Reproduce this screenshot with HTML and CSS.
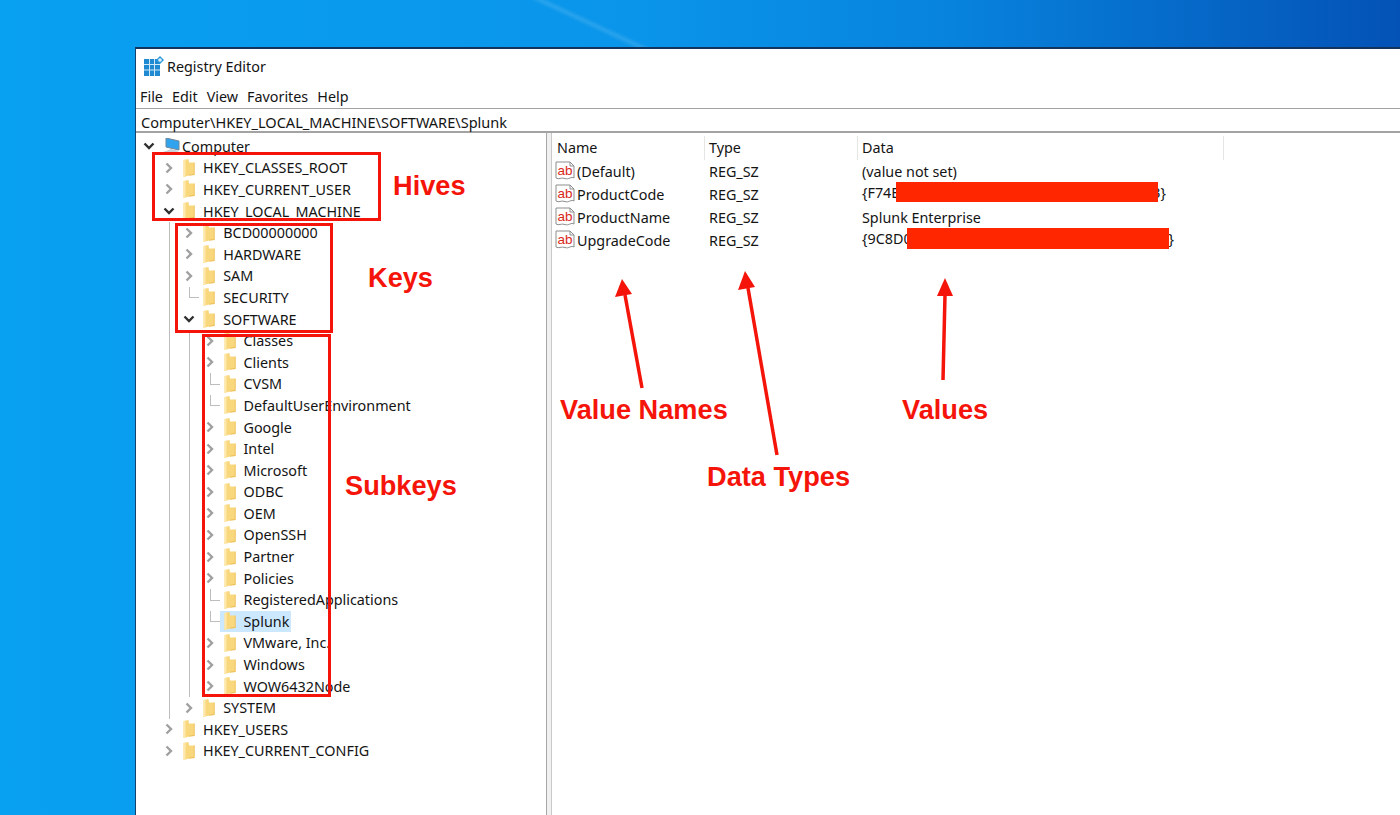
FILE: index.html
```html
<!DOCTYPE html>
<html lang="en">

<head>
  <meta charset="UTF-8">
  <title>Registry Editor</title>
  <link rel="stylesheet" href="styles.css">
</head>

<body>
  <svg class="sprites" xmlns="http://www.w3.org/2000/svg" aria-hidden="true">
    <symbol id="folder" viewBox="0 0 12 18">
      <path d="M0.5 1 L5.5 0 L6 3.5 L11.5 3.5 L11.5 16 L6 16.5 L0.5 18 Z" fill="#f9d77d"></path>
      <path d="M0.5 1 L2.5 0.6 L2.5 17.5 L0.5 18 Z" fill="#fde9ae"></path>
      <path d="M10.8 3.5 L11.5 3.5 L11.5 16 L6 16.5 L6 15.7 L10.8 15.3 Z" fill="#e9b84f"></path>
    </symbol>
    <symbol id="closed" viewBox="0 0 12 12">
      <path d="M3.5 1.5 L8 6 L3.5 10.5" fill="none" stroke="#a0a0a0" stroke-width="2.4"></path>
    </symbol>
    <symbol id="open" viewBox="0 0 12 12">
      <path d="M1.5 3.5 L6 8 L10.5 3.5" fill="none" stroke="#303030" stroke-width="2.4"></path>
    </symbol>
    <symbol id="sheet" viewBox="0 0 20 20">
      <path d="M1 1 H15 L19 5 V17 C16 15 14 19 10 17.5 C6 16 4 19 1 17 Z" fill="#fff" stroke="#8d8d8d" stroke-width="1"></path>
      <path d="M15 1 V5 H19" fill="none" stroke="#8d8d8d" stroke-width="1"></path>
    </symbol>
  </svg>

  <div class="window">
    <header class="titlebar">
      <svg class="app-icon" viewBox="0 0 20 20">
        <rect x="0" y="3" width="16" height="17" fill="#1f8ad2"></rect>
        <path d="M5.5 3 V20 M10.5 3 V20 M0 8.5 H16 M0 14 H16" stroke="#cfe8f7" stroke-width="1"></path>
        <path d="M16 0 L20 4 L16 8 L12 4 Z" fill="#2a96da"></path>
        <circle cx="16" cy="4" r="1.8" fill="#dff1fb"></circle>
      </svg>
      <span>Registry Editor</span>
    </header>

    <nav class="menu">
      <span>File</span>
      <span>Edit</span>
      <span>View</span>
      <span>Favorites</span>
      <span>Help</span>
    </nav>

    <div class="address">Computer\HKEY_LOCAL_MACHINE\SOFTWARE\Splunk</div>

    <main class="panes">
      <div class="tree-pane">
        <div class="row root">
          <svg class="twisty"><use href="#open"></use></svg>
          <svg class="pc-icon" viewBox="0 0 18 17">
            <path d="M3 0 L16 3 V12 L3 9 Z" fill="#2fa3ee" stroke="#6f8799" stroke-width="1"></path>
            <path d="M0 14 L8 11 L16 13 L8 16.5 Z" fill="#c9d1d8"></path>
          </svg>
          <span class="root-label">Computer</span>
        </div>

        <ul class="tree">
          <li class="row"><svg class="twisty"><use href="#closed"></use></svg><span class="item"><svg class="folder"><use href="#folder"></use></svg>HKEY_CLASSES_ROOT</span></li>
          <li class="row"><svg class="twisty"><use href="#closed"></use></svg><span class="item"><svg class="folder"><use href="#folder"></use></svg>HKEY_CURRENT_USER</span></li>
          <li>
            <div class="row"><svg class="twisty"><use href="#open"></use></svg><span class="item"><svg class="folder"><use href="#folder"></use></svg>HKEY_LOCAL_MACHINE</span></div>
            <ul class="tree nested">
              <li class="row"><svg class="twisty"><use href="#closed"></use></svg><span class="item"><svg class="folder"><use href="#folder"></use></svg>BCD00000000</span></li>
              <li class="row"><svg class="twisty"><use href="#closed"></use></svg><span class="item"><svg class="folder"><use href="#folder"></use></svg>HARDWARE</span></li>
              <li class="row"><svg class="twisty"><use href="#closed"></use></svg><span class="item"><svg class="folder"><use href="#folder"></use></svg>SAM</span></li>
              <li class="row"><i class="leaf"></i><span class="item"><svg class="folder"><use href="#folder"></use></svg>SECURITY</span></li>
              <li>
                <div class="row"><svg class="twisty"><use href="#open"></use></svg><span class="item"><svg class="folder"><use href="#folder"></use></svg>SOFTWARE</span></div>
                <ul class="tree nested">
                  <li class="row"><svg class="twisty"><use href="#closed"></use></svg><span class="item"><svg class="folder"><use href="#folder"></use></svg>Classes</span></li>
                  <li class="row"><svg class="twisty"><use href="#closed"></use></svg><span class="item"><svg class="folder"><use href="#folder"></use></svg>Clients</span></li>
                  <li class="row"><i class="leaf"></i><span class="item"><svg class="folder"><use href="#folder"></use></svg>CVSM</span></li>
                  <li class="row"><i class="leaf"></i><span class="item"><svg class="folder"><use href="#folder"></use></svg>DefaultUserEnvironment</span></li>
                  <li class="row"><svg class="twisty"><use href="#closed"></use></svg><span class="item"><svg class="folder"><use href="#folder"></use></svg>Google</span></li>
                  <li class="row"><svg class="twisty"><use href="#closed"></use></svg><span class="item"><svg class="folder"><use href="#folder"></use></svg>Intel</span></li>
                  <li class="row"><svg class="twisty"><use href="#closed"></use></svg><span class="item"><svg class="folder"><use href="#folder"></use></svg>Microsoft</span></li>
                  <li class="row"><svg class="twisty"><use href="#closed"></use></svg><span class="item"><svg class="folder"><use href="#folder"></use></svg>ODBC</span></li>
                  <li class="row"><svg class="twisty"><use href="#closed"></use></svg><span class="item"><svg class="folder"><use href="#folder"></use></svg>OEM</span></li>
                  <li class="row"><svg class="twisty"><use href="#closed"></use></svg><span class="item"><svg class="folder"><use href="#folder"></use></svg>OpenSSH</span></li>
                  <li class="row"><svg class="twisty"><use href="#closed"></use></svg><span class="item"><svg class="folder"><use href="#folder"></use></svg>Partner</span></li>
                  <li class="row"><svg class="twisty"><use href="#closed"></use></svg><span class="item"><svg class="folder"><use href="#folder"></use></svg>Policies</span></li>
                  <li class="row"><i class="leaf"></i><span class="item"><svg class="folder"><use href="#folder"></use></svg>RegisteredApplications</span></li>
                  <li class="row"><i class="leaf"></i><span class="item selected"><svg class="folder"><use href="#folder"></use></svg>Splunk</span></li>
                  <li class="row"><svg class="twisty"><use href="#closed"></use></svg><span class="item"><svg class="folder"><use href="#folder"></use></svg>VMware, Inc.</span></li>
                  <li class="row"><svg class="twisty"><use href="#closed"></use></svg><span class="item"><svg class="folder"><use href="#folder"></use></svg>Windows</span></li>
                  <li class="row"><svg class="twisty"><use href="#closed"></use></svg><span class="item"><svg class="folder"><use href="#folder"></use></svg>WOW6432Node</span></li>
                </ul>
              </li>
              <li class="row"><svg class="twisty"><use href="#closed"></use></svg><span class="item"><svg class="folder"><use href="#folder"></use></svg>SYSTEM</span></li>
            </ul>
          </li>
          <li class="row"><svg class="twisty"><use href="#closed"></use></svg><span class="item"><svg class="folder"><use href="#folder"></use></svg>HKEY_USERS</span></li>
          <li class="row"><svg class="twisty"><use href="#closed"></use></svg><span class="item"><svg class="folder"><use href="#folder"></use></svg>HKEY_CURRENT_CONFIG</span></li>
        </ul>
      </div>

      <div class="list-pane">
        <div class="list-head">
          <span>Name</span>
          <span>Type</span>
          <span>Data</span>
        </div>
        <div class="list-row">
          <span class="name"><svg class="ab-icon" viewBox="0 0 20 20"><use href="#sheet"></use><text x="2.5" y="14" class="ab-text">ab</text></svg>(Default)</span>
          <span>REG_SZ</span>
          <span>(value not set)</span>
        </div>
        <div class="list-row">
          <span class="name"><svg class="ab-icon" viewBox="0 0 20 20"><use href="#sheet"></use><text x="2.5" y="14" class="ab-text">ab</text></svg>ProductCode</span>
          <span>REG_SZ</span>
          <span>{F74E<i class="redact redact-first"></i>3}</span>
        </div>
        <div class="list-row">
          <span class="name"><svg class="ab-icon" viewBox="0 0 20 20"><use href="#sheet"></use><text x="2.5" y="14" class="ab-text">ab</text></svg>ProductName</span>
          <span>REG_SZ</span>
          <span>Splunk Enterprise</span>
        </div>
        <div class="list-row">
          <span class="name"><svg class="ab-icon" viewBox="0 0 20 20"><use href="#sheet"></use><text x="2.5" y="14" class="ab-text">ab</text></svg>UpgradeCode</span>
          <span>REG_SZ</span>
          <span>{9C8D0<i class="redact redact-second"></i>}</span>
        </div>
      </div>
    </main>
  </div>

  <!-- annotations drawn over the screenshot -->
  <div class="box box-hives"></div>
  <div class="box box-keys"></div>
  <div class="box box-subkeys"></div>

  <span class="note note-hives">Hives</span>
  <span class="note note-keys">Keys</span>
  <span class="note note-subkeys">Subkeys</span>
  <span class="note note-names">Value Names</span>
  <span class="note note-types">Data Types</span>
  <span class="note note-values">Values</span>

  <svg class="arrows" viewBox="0 0 1400 815" xmlns="http://www.w3.org/2000/svg">
    <path d="M642 388 L625 295" stroke="#f5140a" stroke-width="3.5"></path>
    <path d="M622 279 L615 297 L632 294 Z" fill="#f5140a"></path>
    <path d="M777 455 L748 288" stroke="#f5140a" stroke-width="3.5"></path>
    <path d="M745 271 L738 290 L755 287 Z" fill="#f5140a"></path>
    <path d="M943 380 L945 295" stroke="#f5140a" stroke-width="3.5"></path>
    <path d="M945 278 L937 296 L953 296 Z" fill="#f5140a"></path>
  </svg>
</body>

</html>
```

FILE: styles.css
```css
:root {
  --ink: #141414;
  --rule: #a3a3a3;
  --line: #bdbdbd;
  --mark: #f5140a;
  --redact: #ff2600;
}

* {
  box-sizing: border-box;
}

html,
body {
  margin: 0;
  height: 100%;
  overflow: hidden;
}

body {
  position: relative;
  padding: 47px 0 0 135px;
  font-family: "Noto Sans", "Open Sans", sans-serif;
  font-size: 14.35px;
  color: var(--ink);
  background:
    linear-gradient(25deg, transparent 42%, rgb(255 255 255 / 0.12) 42.7%, transparent 43.4%) 0 0 / 100% 47px no-repeat,
    linear-gradient(90deg, #08a0f1 0%, #0a95ea 45%, #0783dd 68%, #0452b6 100%);
}

.sprites {
  position: absolute;
  width: 0;
  height: 0;
}

.ab-text {
  font-family: "Liberation Sans", sans-serif;
  font-size: 13.5px;
  fill: #d9281a;
}

.window {
  display: flex;
  flex-direction: column;
  height: 768px;
  background: #fff;
  border-top: 2px solid #12345c;
  border-left: 1px solid #14406e;
}

.titlebar {
  display: flex;
  align-items: center;
  gap: 3px;
  height: 36px;
  padding-block-end: 2px;
  padding-inline-start: 8px;
}

.app-icon {
  width: 20px;
  height: 20px;
}

.menu {
  display: flex;
  align-items: center;
  gap: 9px;
  height: 23.5px;
  padding-inline-start: 4px;
  border-bottom: 1px solid var(--rule);
}

.address {
  display: flex;
  align-items: center;
  height: 24px;
  padding-block-start: 4px;
  padding-inline-start: 5px;
  font-size: 14.55px;
  border-bottom: 2px solid var(--rule);
}

.panes {
  display: flex;
  flex: 1;
  min-height: 0;
  background: #f0f0f0;
}

.tree-pane {
  flex: 0 0 411px;
  padding-block-start: 3px;
  background: #fff;
  border-right: 1px solid #a8a8a8;
}

.tree {
  list-style: none;
  margin: 0;
  padding: 0;
}

.nested {
  position: relative;
  padding-inline-start: 20.25px;
}

.nested::before {
  content: "";
  position: absolute;
  top: 0;
  bottom: 0;
  left: 33px;
  border-left: 1px solid var(--line);
}

.row {
  display: flex;
  align-items: center;
  height: 21.6px;
  padding-inline-start: 25px;
  white-space: nowrap;
}

.root {
  padding-inline-start: 5px;
}

.root-label {
  margin-inline-start: 1px;
}

.twisty {
  flex: none;
  width: 12px;
  height: 12px;
  margin-inline: 2px;
}

.leaf {
  position: relative;
  flex: none;
  align-self: stretch;
  width: 16px;
}

.leaf::before {
  content: "";
  position: absolute;
  top: 0;
  left: 8px;
  width: 9px;
  height: 50%;
  border-left: 1px solid var(--line);
  border-bottom: 1px solid var(--line);
}

.item {
  display: flex;
  align-items: center;
  gap: 8px;
  height: 100%;
  margin-inline-start: 2px;
  padding-inline: 4px 2px;
}

.selected {
  background: #cce8ff;
}

.folder {
  flex: none;
  width: 12px;
  height: 18px;
}

.pc-icon {
  flex: none;
  width: 18px;
  height: 17px;
  margin-inline-start: 6px;
}

.list-pane {
  flex: 1;
  margin-inline-start: 4px;
  background: #fff;
  border-left: 1px solid #c9c9c9;
}

.list-head,
.list-row {
  display: grid;
  grid-template-columns: 153px 153px 366px;
  align-items: center;
  height: 23px;
}

.list-head {
  height: 27px;
  padding-block-start: 3px;
}

.list-head span {
  align-self: stretch;
  display: flex;
  align-items: center;
  padding-inline-start: 5px;
  border-right: 1px solid #e5e5e5;
}

.list-head span+span {
  padding-inline-start: 4px;
}

.list-row span {
  padding-inline-start: 4px;
  white-space: nowrap;
}

.list-row .name {
  display: flex;
  align-items: center;
  gap: 2px;
  padding-inline-start: 3px;
}

.ab-icon {
  flex: none;
  width: 20px;
  height: 20px;
}

.redact {
  position: relative;
  z-index: 1;
  display: inline-block;
  width: 262px;
  height: 20px;
  vertical-align: middle;
  background: var(--redact);
}

.redact-first {
  top: -3px;
  margin-inline: -3px -6px;
}

.redact-second {
  top: -2px;
  height: 21px;
  margin-inline: -5px 0;
}

.box {
  position: absolute;
  border: 3px solid var(--mark);
}

.box-hives {
  left: 152px;
  top: 152px;
  width: 229px;
  height: 69px;
}

.box-keys {
  left: 175px;
  top: 223px;
  width: 158px;
  height: 110px;
}

.box-subkeys {
  left: 202px;
  top: 334px;
  width: 129px;
  height: 363px;
}

.note {
  position: absolute;
  font-family: "Liberation Sans", sans-serif;
  font-size: 27.2px;
  font-weight: 700;
  line-height: 30px;
  color: var(--mark);
  white-space: nowrap;
}

.note-hives {
  left: 393px;
  top: 171px;
}

.note-keys {
  left: 368px;
  top: 263px;
}

.note-subkeys {
  left: 345px;
  top: 471px;
}

.note-names {
  left: 560px;
  top: 395px;
}

.note-types {
  left: 707px;
  top: 462px;
}

.note-values {
  left: 902px;
  top: 395px;
}

.arrows {
  position: absolute;
  inset: 0;
  width: 1400px;
  height: 815px;
  pointer-events: none;
}
```
